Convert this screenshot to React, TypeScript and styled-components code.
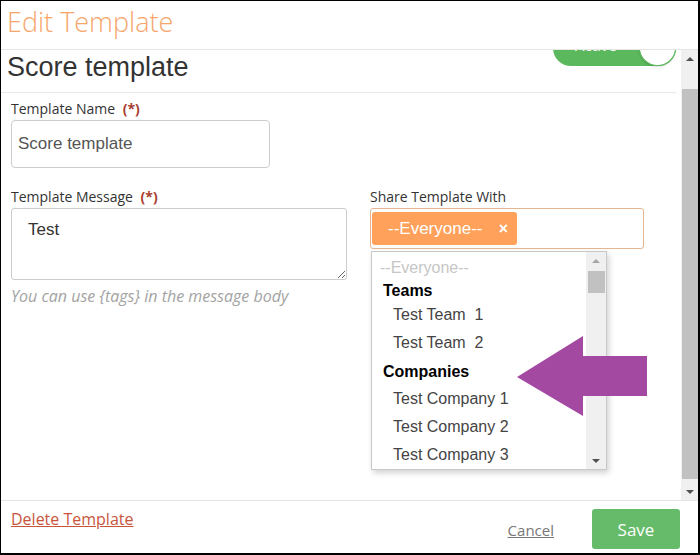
import styled, { createGlobalStyle } from 'styled-components';

const GlobalStyle = createGlobalStyle`
  html, body {
    margin: 0;
    padding: 0;
    background: #fff;
    overflow: hidden;
  }
  * {
    box-sizing: border-box;
  }
  body {
    font-family: 'Open Sans', 'Liberation Sans', sans-serif;
    color: #333;
  }
`;

const teams = ['Test Team  1', 'Test Team  2'];
const companies = ['Test Company 1', 'Test Company 2', 'Test Company 3'];

const App = () => {
  return (
    <>
      <GlobalStyle />
      <Modal>
        <Header>
          <HeaderTitle>Edit Template</HeaderTitle>
        </Header>

        <Body>
          <Content>
            <Scrolled>
              <TitleRow>
                <Title>Score template</Title>
                <Toggle>
                  <ToggleLabel>Active</ToggleLabel>
                  <ToggleKnob />
                </Toggle>
              </TitleRow>

              <Form>
                <Field>
                  <Label>
                    Template Name <Required>(*)</Required>
                  </Label>
                  <TextInput defaultValue="Score template" />
                </Field>

                <FormGrid>
                  <div>
                    <Label>
                      Template Message <Required>(*)</Required>
                    </Label>
                    <TextArea defaultValue="Test" />
                    <Hint>You can use {'{tags}'} in the message body</Hint>
                  </div>

                  <div>
                    <Label>Share Template With</Label>
                    <SelectWrap>
                      <SelectBox>
                        <Tag>
                          <span>--Everyone--</span>
                          <TagRemove>×</TagRemove>
                        </Tag>
                      </SelectBox>

                      <Dropdown>
                        <OptionList>
                          <Placeholder>--Everyone--</Placeholder>
                          <GroupLabel>Teams</GroupLabel>
                          {teams.map((t) => (
                            <Option key={t}>{t}</Option>
                          ))}
                          <GroupLabel $tall>Companies</GroupLabel>
                          {companies.map((c) => (
                            <Option key={c}>{c}</Option>
                          ))}
                        </OptionList>
                        <ScrollBar $width={20}>
                          <ScrollButton $height={17}>
                            <Arrow $dir="up" $color="#a6a6a6" />
                          </ScrollButton>
                          <Track $pad="2px 1px 0 2px">
                            <Thumb $top={0} $height={22} />
                          </Track>
                          <ScrollButton $height={17}>
                            <Arrow $dir="down" $color="#505050" />
                          </ScrollButton>
                        </ScrollBar>
                      </Dropdown>
                    </SelectWrap>
                  </div>
                </FormGrid>
              </Form>
            </Scrolled>
          </Content>

          <ScrollBar $width={17}>
            <ScrollButton $height={17}>
              <Arrow $dir="up" $color="#505050" />
            </ScrollButton>
            <Track $pad="0 0 0 1px">
              <Thumb $top={22} $height={390} />
            </Track>
            <ScrollButton $height={17}>
              <Arrow $dir="down" $color="#505050" />
            </ScrollButton>
          </ScrollBar>
        </Body>

        <Footer>
          <DeleteLink href="#">Delete Template</DeleteLink>
          <Actions>
            <CancelLink href="#">Cancel</CancelLink>
            <SaveButton type="button">Save</SaveButton>
          </Actions>
        </Footer>

        <Pointer width="130" height="80" viewBox="0 0 130 80">
          <polygon
            fill="#a349a1"
            points="0,41 66,0 66,20 130,20 130,60 66,60 66,80"
          />
        </Pointer>
      </Modal>
    </>
  );
};

const Modal = styled.div`
  position: relative;
  display: flex;
  flex-direction: column;

  width: 700px;
  height: 555px;

  background: #fff;
  border-style: solid;
  border-color: #000;
  border-width: 1px 2px 2px 1px;
`;

const Header = styled.div`
  height: 49px;
  padding: 3px 6px 0;

  border-bottom: 1px solid #e5e5e5;
`;

const HeaderTitle = styled.h1`
  margin: 0;

  color: #f7a56b;
  font-size: 27px;
  font-weight: 300;
  line-height: 36px;
`;

const Body = styled.div`
  display: flex;
  height: 450px;
`;

const Content = styled.div`
  flex: 1;
  overflow: hidden;
`;

const Scrolled = styled.div`
  margin-top: -20px;
`;

const TitleRow = styled.div`
  display: flex;
  justify-content: space-between;
  align-items: flex-start;

  margin-right: 5px;
  padding: 0 0 9px 6px;

  border-bottom: 1px solid #e8e8e8;
`;

const Title = styled.h2`
  margin: 21px 0 0;

  color: #333;
  font-family: 'Liberation Sans', Arial, sans-serif;
  font-size: 27px;
  font-weight: 400;
  line-height: 32px;
`;

const Toggle = styled.div`
  position: relative;
  display: flex;
  align-items: center;

  width: 123px;
  height: 36px;
  padding: 0 40px 0 22px;

  background: #5cb85c;
  border-radius: 18px;
`;

const ToggleLabel = styled.span`
  margin-top: -7px;

  color: #fff;
  font-size: 15px;
  line-height: 20px;
`;

const ToggleKnob = styled.span`
  position: absolute;
  top: 0;
  right: 0;

  width: 37px;
  height: 36px;

  background: #fff;
  border: 1px solid #5cb85c;
  border-radius: 50%;
  box-shadow: 0 1px 2px rgba(0, 0, 0, 0.15);
`;

const Form = styled.div`
  padding: 6px 10px 0;
`;

const Field = styled.div`
  margin-bottom: 19px;
`;

const Label = styled.div`
  margin-bottom: 1px;

  color: #333;
  font-size: 14px;
  line-height: 20px;
`;

const Required = styled.span`
  margin-left: 4px;

  color: #a93d30;
  font-weight: 700;
`;

const TextInput = styled.input`
  display: block;

  width: 259px;
  height: 48px;
  padding: 0 6px;

  color: #555;
  font-family: 'Liberation Sans', Arial, sans-serif;
  font-size: 17px;

  border: 1px solid #ccc;
  border-radius: 4px;
  outline: none;
`;

const FormGrid = styled.div`
  display: grid;
  grid-template-columns: 336px 274px;
  column-gap: 23px;
`;

const TextArea = styled.textarea`
  display: block;

  width: 336px;
  height: 72px;
  padding: 11px 16px;

  color: #333;
  font-family: 'Liberation Sans', Arial, sans-serif;
  font-size: 17px;
  line-height: 20px;

  border: 1px solid #ccc;
  border-radius: 3px;
  outline: none;
  resize: both;
`;

const Hint = styled.div`
  margin-top: 5px;

  color: #a3a3a3;
  font-size: 16px;
  font-style: italic;
  line-height: 22px;
`;

const SelectWrap = styled.div`
  position: relative;
`;

const SelectBox = styled.div`
  display: flex;
  align-items: center;

  width: 274px;
  height: 41px;
  padding: 0 1px;

  background: #fff;
  border: 1px solid #e6b592;
  border-radius: 3px;
`;

const Tag = styled.div`
  display: flex;
  align-items: center;
  justify-content: space-between;

  width: 145px;
  height: 33px;
  padding: 0 9px 0 16px;

  color: #fff;
  font-family: 'Liberation Sans', Arial, sans-serif;
  font-size: 17px;

  background: #ffa15a;
  border-radius: 3px;
`;

const TagRemove = styled.span`
  font-size: 16px;
  font-weight: 700;
`;

const Dropdown = styled.div`
  position: absolute;
  top: calc(100% + 2px);
  left: 1px;
  z-index: 2;

  display: flex;

  width: 236px;
  height: 219px;

  background: #fff;
  border: 1px solid #c8c8c8;
  box-shadow: 2px 3px 6px rgba(0, 0, 0, 0.18);
`;

const OptionList = styled.div`
  flex: 1;
  overflow: hidden;

  padding-top: 3px;

  font-family: 'Liberation Sans', Arial, sans-serif;
  font-size: 16px;
`;

const Placeholder = styled.div`
  padding-left: 8px;

  color: #c6c6c6;
  line-height: 26px;
`;

const GroupLabel = styled.div<{ $tall?: boolean }>`
  padding-left: 11px;
  padding-top: ${({ $tall }) => ($tall ? '2px' : '0')};

  color: #000;
  font-weight: 700;
  line-height: ${({ $tall }) => ($tall ? '26px' : '20px')};
`;

const Option = styled.div`
  padding-left: 21px;

  color: #444;
  line-height: 28px;
  white-space: pre;
`;

const ScrollBar = styled.div<{ $width: number }>`
  display: flex;
  flex-direction: column;
  flex-shrink: 0;

  width: ${({ $width }) => $width}px;

  background: #f0f0f0;
`;

const ScrollButton = styled.div<{ $height: number }>`
  display: flex;
  align-items: center;
  justify-content: center;

  height: ${({ $height }) => $height}px;
`;

const Arrow = styled.span<{ $dir: 'up' | 'down'; $color: string }>`
  width: 0;
  height: 0;

  border-left: 4px solid transparent;
  border-right: 4px solid transparent;
  ${({ $dir, $color }) =>
    $dir === 'up'
      ? `border-bottom: 4px solid ${$color};`
      : `border-top: 4px solid ${$color};`}
`;

const Track = styled.div<{ $pad: string }>`
  flex: 1;
  padding: ${({ $pad }) => $pad};
`;

const Thumb = styled.div<{ $top: number; $height: number }>`
  height: ${({ $height }) => $height}px;
  margin-top: ${({ $top }) => $top}px;

  background: #c1c1c1;
`;

const Footer = styled.div`
  display: flex;
  justify-content: space-between;
  align-items: flex-start;

  height: 53px;
  padding: 8px 18px 0 10px;

  border-top: 1px solid #e5e5e5;
`;

const DeleteLink = styled.a`
  color: #c7553c;
  font-size: 16px;
  line-height: 20px;
  text-decoration: underline;
`;

const Actions = styled.div`
  display: flex;
  align-items: center;
  gap: 38px;
`;

const CancelLink = styled.a`
  margin-top: 2px;

  color: #777;
  font-size: 15px;
  line-height: 20px;
  text-decoration: underline;
`;

const SaveButton = styled.button`
  width: 88px;
  height: 40px;

  color: #fff;
  font-family: 'Open Sans', sans-serif;
  font-size: 17px;

  background: #66bb6a;
  border: none;
  border-radius: 3px;
`;

const Pointer = styled.svg`
  position: absolute;
  left: 516px;
  top: 335px;
  z-index: 3;
`;

export default App;
